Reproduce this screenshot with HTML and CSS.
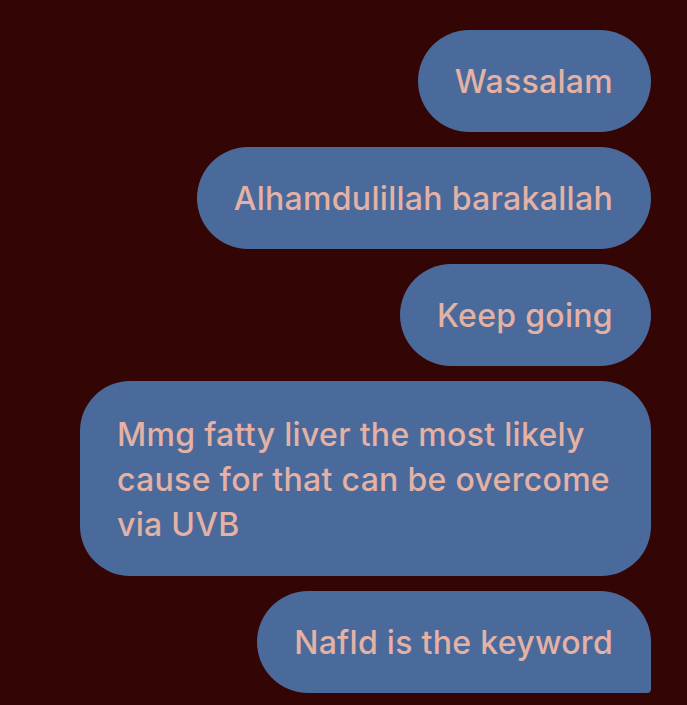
FILE: index.html
```html
<!DOCTYPE html>
<html>
<head>
<meta charset="utf-8">
<link rel="stylesheet" href="styles.css">
</head>
<body>
<div class="thread">
  <div class="bubble">Wassalam</div>
  <div class="bubble">Alhamdulillah barakallah</div>
  <div class="bubble">Keep going</div>
  <div class="bubble multi">Mmg fatty liver the most likely cause for that can be overcome via UVB</div>
  <div class="bubble last">Nafld is the keyword</div>
</div>
</body>
</html>
```
FILE: styles.css
```css
html, body {
  margin: 0;
  padding: 0;
  background: #340505;
}
body {
  width: 687px;
  height: 705px;
  overflow: hidden;
}
.thread {
  display: flex;
  flex-direction: column;
  align-items: flex-end;
  gap: 15px;
  padding: 30px 36px 0 0;
}
.bubble {
  background: #4a6a9b;
  color: #e4b1a5;
  font-family: Inter, "Noto Sans", sans-serif;
  font-weight: 500;
  font-size: 32px;
  line-height: 45px;
  letter-spacing: 0.3px;
  padding: 29px 38px 28px 37px;
  border-radius: 51px;
  max-width: 496px;
}
.multi {
  border-radius: 50px;
  padding: 31px 38px 29px 37px;
}
.last {
  border-bottom-right-radius: 4px;
}
```
